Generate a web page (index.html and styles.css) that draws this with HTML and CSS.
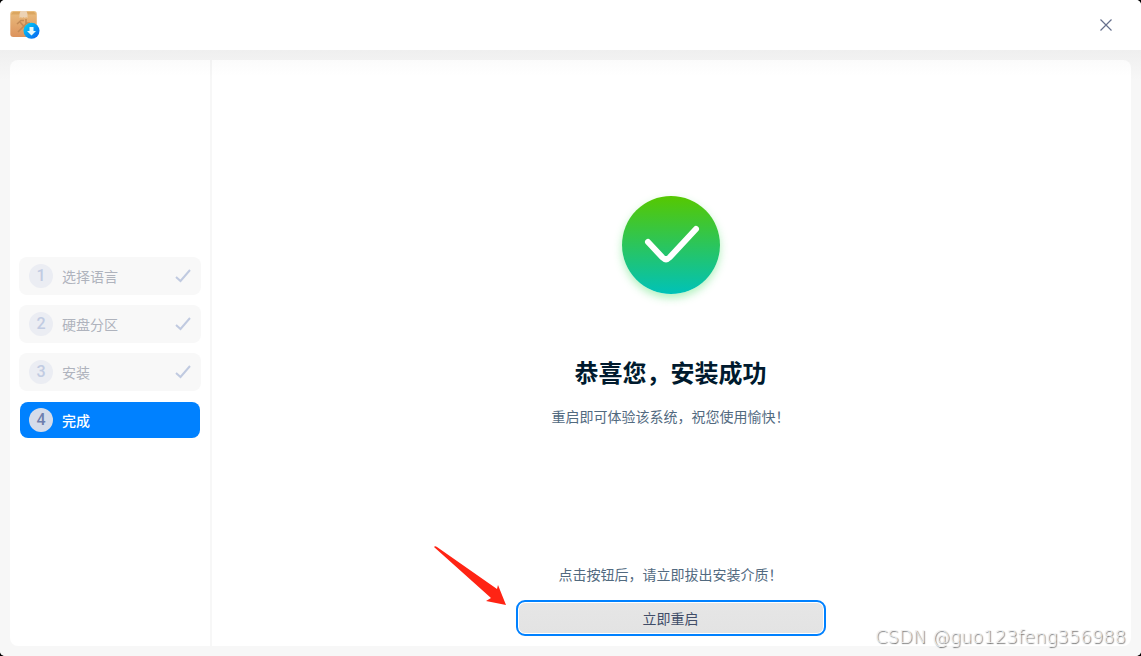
FILE: index.html
```html
<!DOCTYPE html>
<html lang="zh-CN">
<head>
  <meta charset="UTF-8" />
  <meta name="viewport" content="width=device-width, initial-scale=1.0"/>
  <title>安装成功</title>
  <link rel="stylesheet" href="styles.css">
</head>
<body>

  <div class="window">
    <header class="titlebar">
      <svg class="app-icon" width="32" height="32" viewBox="0 0 32 32" aria-hidden="true">
        <defs>
          <linearGradient id="box" x1="0" y1="0" x2="0" y2="1">
            <stop offset="0" stop-color="#e9bd7e"/>
            <stop offset="1" stop-color="#dc935d"/>
          </linearGradient>
          <linearGradient id="badge" x1="0" y1="0" x2="1" y2="1">
            <stop offset="0" stop-color="#00d8f8"/>
            <stop offset="1" stop-color="#0a5cf0"/>
          </linearGradient>
        </defs>
        <rect x="0.300" y="2" width="26.500" height="26" rx="3" fill="url(#box)"/>
        <path d="M1 5.500 L3 3 H24 L26 5.500 Z" fill="#dba660"/>
        <path d="M10.500 2 H16.500 L17.500 5 V9 L16 8 L15 9 L13.500 8 L12 9 L11 8 L9.500 9 V5 Z" fill="#ecd2b4"/>
        <g stroke="#c28a55" stroke-width="1.600" fill="none">
          <path d="M10 13 L19 23"/>
          <path d="M17 14 L8 23"/>
          <path d="M7 15 L11 11.500 L14 11.500"/>
          <path d="M16 10 L16 14 L20 14"/>
        </g>
        <circle cx="21.500" cy="21.800" r="8" fill="url(#badge)"/>
        <path d="M19.500 18 H23.500 V22 H26 L21.500 26.500 L17 22 H19.500 Z" fill="#e8f8fb"/>
      </svg>
      <button class="close-btn" type="button" aria-label="关闭">
        <svg width="12" height="12" viewBox="0 0 12 12" aria-hidden="true">
          <path d="M0.500 0.500 L11.500 11.500 M11.500 0.500 L0.500 11.500" stroke="#66708c" stroke-width="1.200"/>
        </svg>
      </button>
    </header>

    <div class="container">
      <nav class="sidebar">
        <ol class="steps">
          <li class="step">
            <span class="step-num">1</span>
            <span class="step-name">选择语言</span>
            <svg class="step-check" width="16" height="14" viewBox="0 0 16 14" aria-hidden="true"><path d="M1 8 L5.500 12 L15 1"/></svg>
          </li>
          <li class="step">
            <span class="step-num">2</span>
            <span class="step-name">硬盘分区</span>
            <svg class="step-check" width="16" height="14" viewBox="0 0 16 14" aria-hidden="true"><path d="M1 8 L5.500 12 L15 1"/></svg>
          </li>
          <li class="step">
            <span class="step-num">3</span>
            <span class="step-name">安装</span>
            <svg class="step-check" width="16" height="14" viewBox="0 0 16 14" aria-hidden="true"><path d="M1 8 L5.500 12 L15 1"/></svg>
          </li>
          <li class="step active" aria-current="step">
            <span class="step-num">4</span>
            <span class="step-name">完成</span>
          </li>
        </ol>
      </nav>

      <main class="content">
        <div class="result">
          <div class="success-icon">
            <svg width="98" height="98" viewBox="0 0 98 98" aria-hidden="true">
              <path d="M26 46 L40.500 61.500 Q44 65 47.500 61.500 L74 33" fill="none" stroke="#fff" stroke-width="6" stroke-linecap="round" stroke-linejoin="round"/>
            </svg>
          </div>
          <h1>恭喜您，安装成功</h1>
          <p>重启即可体验该系统，祝您使用愉快！</p>
        </div>
        <div class="actions">
          <p>点击按钮后，请立即拔出安装介质！</p>
          <button class="restart-btn" type="button">立即重启</button>
          <svg class="arrow" width="74" height="62" viewBox="0 0 74 62" aria-hidden="true">
            <path d="M0 1 Q1 -0.500 3 1 L63 43 L64 39 L72 59 L52 55 L57 52 Z" fill="#ff2414"/>
          </svg>
        </div>
      </main>
    </div>

    <div class="watermark">CSDN @guo123feng356988</div>
  </div>

</body>
</html>
```
FILE: styles.css
```css
* {
  box-sizing: border-box;
}

body {
  margin: 0;
  background: #000;
  font-family: "Noto Sans CJK SC", sans-serif;
  font-size: 14px;
  line-height: 20px;
}

h1,
p,
ol {
  margin: 0;
  padding: 0;
}

button {
  font: inherit;
  cursor: pointer;
}

.window {
  position: relative;
  display: flex;
  flex-direction: column;
  min-height: 100vh;
  background: #f7f7f7;
  border-radius: 5px;
  overflow: hidden;
}

.titlebar {
  display: flex;
  justify-content: space-between;
  align-items: center;
  height: 50px;
  padding: 0 25px 0 10px;
  background: #fff;
}

.app-icon {
  display: block;
}

.close-btn {
  display: flex;
  padding: 4px;
  background: none;
  border: none;
}

.container {
  flex: 1;
  display: flex;
  gap: 2px;
  padding: 10px;
  background: linear-gradient(#efefef, #f7f7f7 30px);
}

.sidebar,
.content {
  display: flex;
  flex-direction: column;
  background: linear-gradient(#fbfbfb, #fff 16px);
}

.sidebar {
  width: 200px;
  justify-content: center;
  padding: 0 9px 10px;
  border-radius: 8px 0 0 8px;
}

.steps {
  display: flex;
  flex-direction: column;
  gap: 10px;
  list-style: none;
}

.step {
  display: flex;
  align-items: center;
  gap: 9px;
  height: 38px;
  padding: 0 10px;
  border-radius: 8px;
  background: #f8f8f8;
  color: #afb3bd;
}

.step-num {
  width: 24px;
  height: 24px;
  border-radius: 50%;
  background: #ebedf3;
  color: #c1cbe2;
  font-family: Roboto, sans-serif;
  font-size: 16px;
  font-weight: 500;
  line-height: 24px;
  text-align: center;
}

.step-check {
  margin-left: auto;
  fill: none;
  stroke: #c0cae0;
  stroke-width: 2;
}

.step.active {
  height: 36px;
  margin: 1px;
  padding: 0 9px;
  background: #0081ff;
  color: #fff;
  font-weight: 500;
}

.step.active .step-num {
  background: #d5dcea;
  color: #6f7fae;
}

.content {
  flex: 1;
  align-items: center;
  padding-right: 2px;
  border-radius: 0 8px 8px 0;
}

.result {
  flex: 1;
  display: flex;
  flex-direction: column;
  align-items: center;
  justify-content: center;
  padding-bottom: 2px;
  text-align: center;
  color: #526a7f;
}

.success-icon {
  width: 98px;
  height: 98px;
  margin-bottom: 60px;
  border-radius: 50%;
  background: linear-gradient(#56c800, #00c2b8);
  box-shadow: 0 4px 8px rgba(60, 220, 90, 0.4);
}

.result h1 {
  margin-bottom: 16px;
  color: #001a2e;
  font-size: 24px;
  font-weight: 700;
  line-height: 36px;
}

.actions {
  position: relative;
  display: flex;
  flex-direction: column;
  align-items: center;
  gap: 16px;
  width: 310px;
  padding-bottom: 10px;
  color: #526a7f;
}

.restart-btn {
  width: 100%;
  height: 36px;
  padding: 0;
  border: 2px solid #0081ff;
  border-radius: 9px;
  background: linear-gradient(#e6e6e6, #e3e3e3);
  box-shadow: inset 0 0 0 1px #fff;
  color: #414d68;
}

/* arrow pointing at the restart button */
.arrow {
  position: absolute;
  right: 100%;
  bottom: 38px;
  margin-right: 8px;
}

.watermark {
  position: absolute;
  right: 15px;
  bottom: 7px;
  color: #f0f0f0;
  font-family: "DejaVu Sans", sans-serif;
  font-size: 18px;
  font-weight: 200;
  line-height: 24px;
  text-shadow: 1px 1px 1px #666;
}
```
